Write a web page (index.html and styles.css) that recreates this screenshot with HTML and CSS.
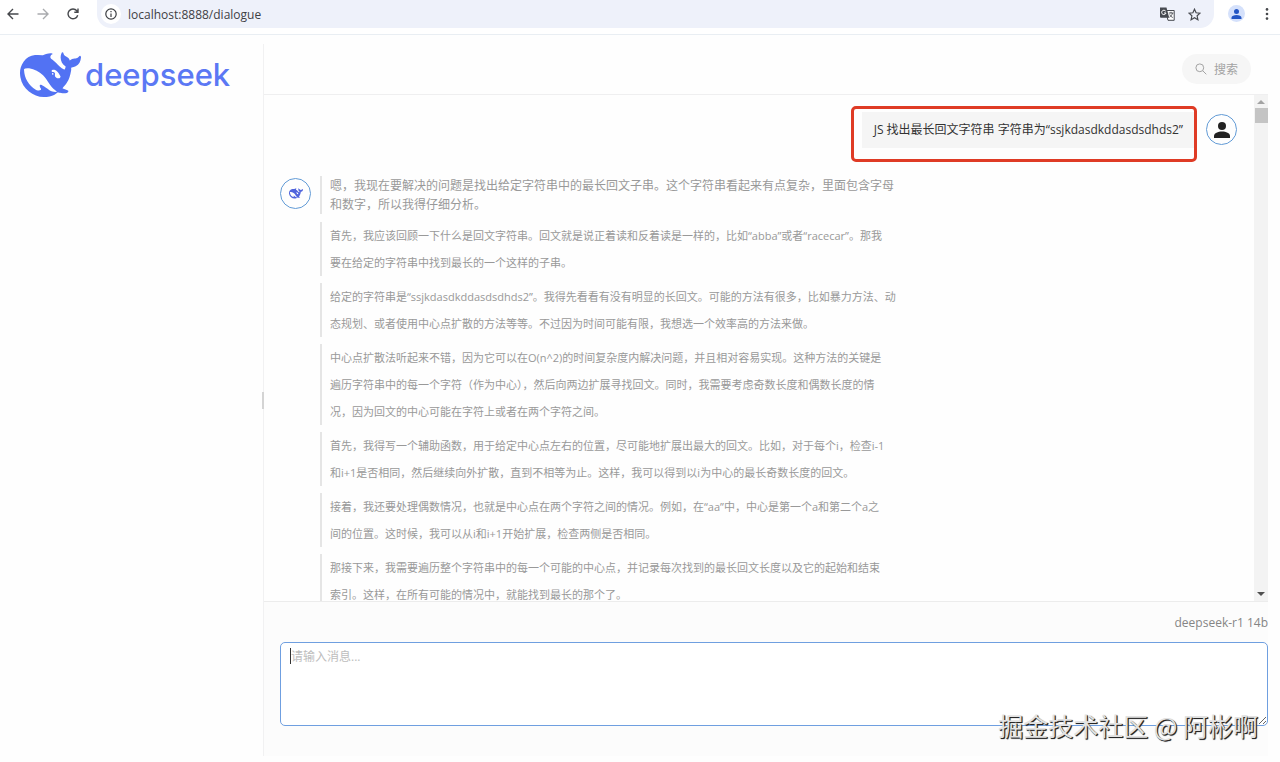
FILE: index.html
```html
<!DOCTYPE html>
<html lang="zh-CN">
<head>
    <meta charset="UTF-8">
    <meta name="viewport" content="width=device-width, initial-scale=1.0">
    <title>dialogue</title>
    <link rel="stylesheet" href="styles.css">
</head>
<body>
    <svg class="defs" aria-hidden="true">
        <symbol id="whale" viewBox="0 3 24 18">
            <path d="M23.748 4.482c-.254-.124-.364.113-.512.234-.051.039-.094.09-.137.136-.372.397-.806.657-1.373.626-.829-.046-1.537.214-2.163.848-.133-.782-.575-1.248-1.247-1.548-.352-.156-.708-.311-.955-.65-.172-.241-.219-.51-.305-.774-.055-.16-.11-.323-.293-.35-.2-.031-.278.136-.356.276-.313.572-.434 1.202-.422 1.84.027 1.436.633 2.58 1.838 3.393.137.093.172.187.129.323-.082.28-.18.552-.266.833-.055.179-.137.217-.329.14a5.526 5.526 0 01-1.736-1.18c-.857-.828-1.631-1.742-2.597-2.458a11.365 11.365 0 00-.689-.471c-.985-.957.13-1.743.388-1.836.27-.098.093-.432-.779-.428-.872.004-1.67.295-2.687.684a3.055 3.055 0 01-.465.137 9.597 9.597 0 00-2.883-.102c-1.885.21-3.39 1.102-4.497 2.623C.082 8.606-.231 10.684.152 12.85c.403 2.284 1.569 4.175 3.36 5.653 1.858 1.533 3.997 2.284 6.438 2.14 1.482-.085 3.133-.284 4.994-1.86.47.234.962.327 1.78.397.63.059 1.236-.03 1.705-.128.735-.156.684-.837.419-.961-2.155-1.004-1.682-.595-2.113-.926 1.096-1.296 2.746-2.642 3.392-7.003.05-.347.007-.565 0-.845-.004-.17.035-.237.23-.256a4.173 4.173 0 001.545-.475c1.396-.763 1.96-2.015 2.093-3.517.02-.23-.004-.467-.247-.588zM11.581 18c-2.089-1.642-3.102-2.183-3.52-2.16-.392.024-.321.471-.235.763.09.288.207.486.371.739.114.167.192.416-.113.603-.673.416-1.842-.14-1.897-.167-1.361-.802-2.5-1.86-3.301-3.307-.774-1.393-1.224-2.887-1.298-4.482-.02-.386.093-.522.477-.592a4.696 4.696 0 011.529-.039c2.132.312 3.946 1.265 5.468 2.774.868.86 1.525 1.887 2.202 2.891.72 1.066 1.494 2.082 2.48 2.914.348.292.625.514.891.677-.802.09-2.14.11-3.054-.614zm1-6.44a.306.306 0 01.415-.287.302.302 0 01.2.288.306.306 0 01-.31.307.303.303 0 01-.304-.308zm3.11 1.596c-.2.081-.399.151-.59.16a1.245 1.245 0 01-.798-.254c-.274-.23-.47-.358-.552-.758a1.73 1.73 0 01.016-.588c.07-.327-.008-.537-.239-.727-.187-.156-.426-.199-.688-.199a.559.559 0 01-.254-.078c-.11-.114-.191-.25-.114-.456.028-.054.16-.186.192-.21.356-.202.767-.136 1.146.016.352.144.618.408 1.001.782.391.451.462.576.685.914.176.265.336.537.445.848.067.195-.019.354-.25.452z"/>
        </symbol>
        <symbol id="person" viewBox="0 0 16 16">
            <circle cx="8" cy="4" r="4"/>
            <path d="M0 16v-2c0-3 4-4.500 8-4.500s8 1.500 8 4.500v2z"/>
        </symbol>
    </svg>

    <header class="browser-bar">
        <button class="nav-button" aria-label="Back">
            <svg width="12" height="12" viewBox="0 0 12 12"><path d="M11.500 6H1M6 1L1 6l5 5"/></svg>
        </button>
        <button class="nav-button disabled" aria-label="Forward">
            <svg width="12" height="12" viewBox="0 0 12 12"><path d="M.5 6H11M6 1l5 5-5 5"/></svg>
        </button>
        <button class="nav-button" aria-label="Reload">
            <svg width="12" height="12" viewBox="0 0 12 12"><path d="M10.700 7.200A4.900 4.900 0 1 1 9.800 2.800L11 4.200M11 .6v3.700H7.300"/></svg>
        </button>
        <div class="address-bar">
            <span class="site-info">
                <svg width="12" height="12" viewBox="0 0 12 12"><circle cx="6" cy="6" r="5.200"/><path d="M6 5.400V9M6 3v1.300"/></svg>
            </span>
            <input class="address-input" type="text" value="localhost:8888/dialogue" aria-label="Address">
            <button class="bar-button" aria-label="Translate">
                <svg width="15" height="14" viewBox="0 0 15 14">
                    <path d="M5.500 3.500h8.700v9.800H8z" fill="#fff" stroke="#474a50"/>
                    <path d="M0 .5h6.500l2.700 10.300H1a1 1 0 0 1-1-1z" fill="#474a50"/>
                    <path d="M5.700 4.200A2.200 2.200 0 1 0 6 6H4" fill="none" stroke="#fff"/>
                    <path d="M8.800 6h4.600M11 4.800V6M12.500 6c-.4 2-1.800 3.500-3 4.200M9.800 7.500c.7 1.500 1.700 2.500 3 3" fill="none" stroke="#474a50" stroke-width=".9"/>
                </svg>
            </button>
            <button class="bar-button" aria-label="Bookmark">
                <svg width="13" height="13" viewBox="0 0 13 13"><path d="M6.500 1.200l1.600 3.600 3.900.4-2.900 2.600.8 3.900-3.400-2-3.400 2 .8-3.900L1 5.200l3.900-.4z" fill="none" stroke="#474a50" stroke-width="1.200"/></svg>
            </button>
        </div>
        <button class="profile-button" aria-label="Profile">
            <svg width="11" height="10"><use href="#person"/></svg>
        </button>
        <button class="bar-button menu-button" aria-label="Menu">
            <svg width="4" height="12" viewBox="0 0 4 12"><circle cx="2" cy="1.400" r="1.300"/><circle cx="2" cy="6" r="1.300"/><circle cx="2" cy="10.600" r="1.300"/></svg>
        </button>
    </header>

    <div class="app">
        <aside class="sidebar">
            <div class="logo">
                <svg class="logo-whale" width="61" height="46"><use href="#whale"/></svg>
                <span class="logo-text">deepseek</span>
            </div>
            <span class="resize-handle"></span>
        </aside>

        <main class="dialogue">
            <div class="toolbar">
                <button class="search-button">
                    <svg width="12" height="12" viewBox="0 0 12 12"><circle cx="4.800" cy="4.800" r="3.900"/><path d="M7.700 7.700l3.600 3.600"/></svg>
                    搜索
                </button>
            </div>

            <div class="chat">
                <div class="messages">
                    <div class="message user">
                        <div class="bubble">JS 找出最长回文字符串 字符串为“ssjkdasdkddasdsdhds2”</div>
                        <span class="avatar"><svg width="16" height="16"><use href="#person"/></svg></span>
                    </div>
                    <div class="message bot">
                        <span class="avatar"><svg width="14" height="11"><use href="#whale"/></svg></span>
                        <div class="thinking">
                            <p class="lead">嗯，我现在要解决的问题是找出给定字符串中的最长回文子串。这个字符串看起来有点复杂，里面包含字母<br>和数字，所以我得仔细分析。</p>
                            <p>首先，我应该回顾一下什么是回文字符串。回文就是说正着读和反着读是一样的，比如“abba”或者“racecar”。那我<br>要在给定的字符串中找到最长的一个这样的子串。</p>
                            <p>给定的字符串是“ssjkdasdkddasdsdhds2”。我得先看看有没有明显的长回文。可能的方法有很多，比如暴力方法、动<br>态规划、或者使用中心点扩散的方法等等。不过因为时间可能有限，我想选一个效率高的方法来做。</p>
                            <p>中心点扩散法听起来不错，因为它可以在O(n^2)的时间复杂度内解决问题，并且相对容易实现。这种方法的关键是<br>遍历字符串中的每一个字符（作为中心），然后向两边扩展寻找回文。同时，我需要考虑奇数长度和偶数长度的情<br>况，因为回文的中心可能在字符上或者在两个字符之间。</p>
                            <p>首先，我得写一个辅助函数，用于给定中心点左右的位置，尽可能地扩展出最大的回文。比如，对于每个i，检查i-1<br>和i+1是否相同，然后继续向外扩散，直到不相等为止。这样，我可以得到以i为中心的最长奇数长度的回文。</p>
                            <p>接着，我还要处理偶数情况，也就是中心点在两个字符之间的情况。例如，在“aa”中，中心是第一个a和第二个a之<br>间的位置。这时候，我可以从i和i+1开始扩展，检查两侧是否相同。</p>
                            <p>那接下来，我需要遍历整个字符串中的每一个可能的中心点，并记录每次找到的最长回文长度以及它的起始和结束<br>索引。这样，在所有可能的情况中，就能找到最长的那个了。</p>
                        </div>
                    </div>
                </div>
                <div class="scrollbar">
                    <svg width="8" height="4" viewBox="0 0 8 4"><path d="M0 4l4-4 4 4z" fill="#a3a3a3"/></svg>
                    <span class="thumb"></span>
                    <svg width="8" height="4" viewBox="0 0 8 4"><path d="M0 0l4 4 4-4z" fill="#505050"/></svg>
                </div>
            </div>

            <div class="composer">
                <label class="model-name" for="message">deepseek-r1 14b</label>
                <div class="input-wrap">
                    <textarea id="message" class="message-input" placeholder="请输入消息..."></textarea>
                    <span class="caret"></span>
                </div>
            </div>
        </main>
    </div>

    <div class="watermark">掘金技术社区 @ 阿彬啊</div>
</body>
</html>
```
FILE: styles.css
```css
* {
    margin: 0;
    padding: 0;
    box-sizing: border-box;
}

body {
    height: 100vh;
    display: flex;
    flex-direction: column;
    overflow: hidden;
    font-family: "Open Sans", "Noto Sans CJK SC", sans-serif;
    font-size: 12px;
    color: #333;
    background: #fefefe;
}

button,
input,
textarea {
    font: inherit;
    color: inherit;
    border: none;
    background: none;
    outline: none;
}

button {
    cursor: pointer;
}

svg {
    display: block;
    flex-shrink: 0;
}

.defs {
    position: absolute;
    width: 0;
    height: 0;
}

/* browser bar */
.browser-bar {
    display: flex;
    align-items: flex-start;
    height: 35px;
    flex-shrink: 0;
    padding-left: 4px;
    border-bottom: 1px solid #e9eef3;
    background: #fff;
}

.nav-button {
    display: flex;
    align-items: center;
    justify-content: center;
    width: 18px;
    height: 28px;
    margin-right: 12px;
}

.nav-button svg {
    fill: none;
    stroke: #46484c;
    stroke-width: 1.4;
}

.nav-button.disabled svg {
    stroke: #a9abae;
}

.address-bar {
    flex: 1;
    display: flex;
    align-items: center;
    gap: 13px;
    height: 28px;
    margin-left: 3px;
    padding: 0 13px 0 4px;
    border-radius: 0 0 14px 14px;
    background: #eef1fa;
}

.site-info {
    display: flex;
    align-items: center;
    justify-content: center;
    width: 20px;
    height: 20px;
    border-radius: 50%;
    background: #fff;
}

.site-info svg {
    fill: none;
    stroke: #3c3e42;
    stroke-width: 1.2;
}

.address-input {
    flex: 1;
    min-width: 0;
    margin-left: -6px;
    color: #3f4145;
}

.bar-button svg {
    fill: #46484c;
}

.profile-button {
    display: flex;
    align-items: center;
    justify-content: center;
    width: 17px;
    height: 17px;
    margin: 5px 20px 0 14px;
    border-radius: 50%;
    background: #d5e1fb;
}

.profile-button svg {
    fill: #2456c4;
}

.menu-button {
    height: 28px;
    padding-right: 11px;
}

/* page */
.app {
    flex: 1;
    min-height: 0;
    display: flex;
    padding: 9px 12px 6px 0;
}

.sidebar {
    position: relative;
    width: 263px;
    flex-shrink: 0;
}

.logo {
    display: flex;
    align-items: center;
    gap: 4px;
    padding: 8px 20px;
}

.logo-whale {
    fill: #5272f3;
}

.logo-text {
    font-family: Inter, sans-serif;
    font-size: 31px;
    font-weight: 500;
    line-height: 46px;
    color: #5b78f4;
}

.resize-handle {
    position: absolute;
    top: 50%;
    right: -1px;
    width: 2px;
    height: 17px;
    margin-top: -8px;
    background: #d4d4d4;
}

.dialogue {
    flex: 1;
    min-width: 0;
    display: flex;
    flex-direction: column;
    border-left: 1px solid #f1f1f2;
}

.toolbar {
    display: flex;
    justify-content: flex-end;
    align-items: center;
    height: 51px;
    flex-shrink: 0;
    padding-right: 17px;
    border-bottom: 1px solid #efeff0;
}

.search-button {
    display: flex;
    align-items: center;
    gap: 7px;
    height: 30px;
    padding: 0 13px;
    border-radius: 15px;
    color: #a3a3a3;
    background: #f6f6f6;
}

.search-button svg {
    fill: none;
    stroke: #a3a3a3;
}

.chat {
    flex: 1;
    min-height: 0;
    display: flex;
    border-bottom: 1px solid #ececec;
}

.messages {
    flex: 1;
    min-width: 0;
    overflow: hidden;
    padding: 17px 17px 0 16px;
}

.message {
    display: flex;
}

.message.user {
    justify-content: flex-end;
    gap: 11px;
    margin-bottom: 28px;
}

.message.bot {
    gap: 9px;
}

.avatar {
    display: flex;
    align-items: center;
    justify-content: center;
    width: 31px;
    height: 31px;
    flex-shrink: 0;
    margin-top: 2px;
    border: 1px solid #629bd6;
    border-radius: 50%;
    fill: #222;
}

.bot .avatar {
    fill: #5064dc;
}

.bubble {
    position: relative;
    padding: 0 12px;
    line-height: 36px;
    color: #333;
    background: #f5f5f5;
}

/* highlight frame around the question */
.bubble::after {
    content: "";
    position: absolute;
    inset: -6px -2px -14px -11px;
    border: 3px solid #df3b25;
    border-radius: 5px;
}

.thinking {
    color: #999;
}

.thinking p {
    margin-bottom: 7px;
    padding-left: 8px;
    border-left: 2px solid #e5e5e5;
    font-size: 11px;
    line-height: 27px;
    white-space: nowrap;
}

.thinking .lead {
    margin-bottom: 8px;
    font-size: 12px;
    line-height: 19px;
}

.scrollbar {
    display: flex;
    flex-direction: column;
    align-items: center;
    gap: 4px;
    width: 14px;
    padding: 5px 0;
    background: #f3f3f3;
}

.thumb {
    width: 13px;
    height: 15px;
    margin-bottom: auto;
    background: #c4c4c4;
}

.composer {
    display: flex;
    flex-direction: column;
    padding: 13px 0 30px 16px;
    background: #fcfcfc;
}

.model-name {
    margin-bottom: 11px;
    line-height: 16px;
    text-align: right;
    color: #858585;
}

.input-wrap {
    position: relative;
    display: flex;
}

.message-input {
    flex: 1;
    height: 84px;
    padding: 4px 10px;
    border: 1px solid #6f9fe0;
    border-radius: 5px;
    line-height: 20px;
    background: #fff;
    resize: vertical;
}

.message-input::placeholder {
    color: #bdbdbd;
}

.caret {
    position: absolute;
    top: 6px;
    left: 10px;
    width: 1px;
    height: 16px;
    background: #333;
}

.watermark {
    position: absolute;
    right: 22px;
    bottom: 19px;
    font-family: "Noto Sans CJK SC", sans-serif;
    font-size: 25px;
    line-height: 36px;
    color: #e2e2e2;
    text-shadow: 1px 1px 1px #222, 1px 1px 0 #444;
    pointer-events: none;
}
```
